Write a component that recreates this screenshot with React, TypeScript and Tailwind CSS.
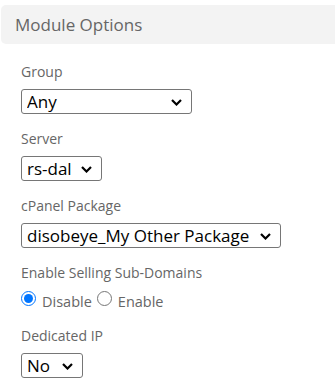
import { useState } from "react";

const fieldLabel = "block text-[14px] leading-[20px] text-[#666666] mb-[7px]";
const selectBase =
  "appearance-none h-[25px] border border-[#767676] rounded-[3px] bg-white text-[17px] leading-[23px] text-black pl-[5px] pr-[28px]";

function Chevron() {
  return (
    <svg
      className="pointer-events-none absolute right-[10px] top-[10px]"
      width="11"
      height="7"
      viewBox="0 0 11 7"
      fill="none"
    >
      <path d="M1 1L5.5 5.5L10 1" stroke="#000" strokeWidth="2.2" />
    </svg>
  );
}

function Select({ width, options }: { width: string; options: string[] }) {
  return (
    <div className="relative inline-block">
      <select className={`${selectBase} ${width}`} defaultValue={options[0]}>
        {options.map((o) => (
          <option key={o} value={o}>
            {o}
          </option>
        ))}
      </select>
      <Chevron />
    </div>
  );
}

export default function App() {
  const [selling, setSelling] = useState("disable");

  return (
    <div className="w-[335px] h-[387px] bg-white font-['Open_Sans',sans-serif] overflow-hidden">
      <div className="mt-[5px] ml-[1px] h-[39px] rounded-l-[5px] bg-[#f3f3f3] flex items-center pl-[14px]">
        <h3 className="text-[17px] text-[#666666]">Module Options</h3>
      </div>

      <div className="px-[21px] pt-[18px]">
        <div className="mb-[15px]">
          <label className={fieldLabel}>Group</label>
          <Select width="w-[171px]" options={["Any", "Shared Hosting"]} />
        </div>

        <div className="mb-[15px]">
          <label className={fieldLabel}>Server</label>
          <Select width="w-[81px]" options={["rs-dal"]} />
        </div>

        <div className="mb-[15px]">
          <label className={fieldLabel}>cPanel Package</label>
          <Select width="w-[260px]" options={["disobeye_My Other Package"]} />
        </div>

        <div className="mb-[15px]">
          <label className={fieldLabel}>Enable Selling Sub-Domains</label>
          <div className="flex items-start h-[21px] text-[14.5px] text-[#666666] leading-[20px]">
            <label className="flex items-start">
              <input
                type="radio"
                name="selling"
                checked={selling === "disable"}
                onChange={() => setSelling("disable")}
                className="w-[15px] h-[15px] mt-[1px] accent-[#0075ff]"
              />
              <span className="ml-[6px] pt-[2px]">Disable</span>
            </label>
            <label className="flex items-start ml-[5px]">
              <input
                type="radio"
                name="selling"
                checked={selling === "enable"}
                onChange={() => setSelling("enable")}
                className="w-[15px] h-[15px] mt-[1px] accent-[#0075ff]"
              />
              <span className="ml-[6px] pt-[2px]">Enable</span>
            </label>
          </div>
        </div>

        <div>
          <label className={fieldLabel}>Dedicated IP</label>
          <Select width="w-[62px]" options={["No", "Yes"]} />
        </div>
      </div>
    </div>
  );
}
